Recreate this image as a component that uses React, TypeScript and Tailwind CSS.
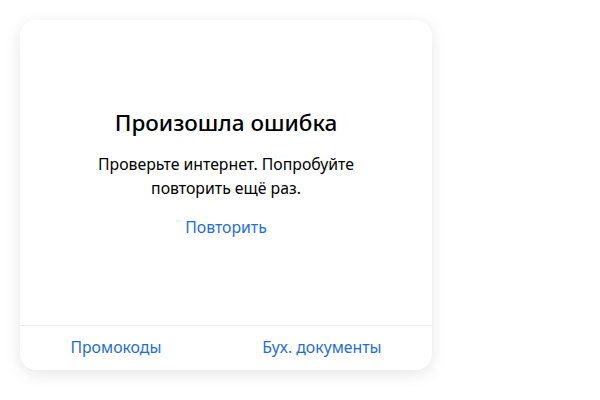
export default function App() {
  return (
    <div className="h-[400px] w-[600px] bg-white font-['Noto_Sans',sans-serif]">
      <div className="pt-5 pl-5">
        <div className="flex h-[350px] w-[412px] flex-col rounded-[16px] bg-white shadow-[0_4px_16px_rgba(0,0,0,0.1)]">
          <div className="flex flex-1 flex-col items-center justify-center border-b border-[#ebebeb] px-6 pt-[2px] text-center">
            <h1 className="text-[22.5px] leading-[28px] font-medium text-black">Произошла ошибка</h1>
            <p className="mt-[15px] text-[15.8px] leading-6 text-black">
              Проверьте интернет. Попробуйте
              <br />
              повторить ещё раз.
            </p>
            <button className="mt-[15px] text-[15.8px] leading-6 text-[#1f6dd6]">Повторить</button>
          </div>
          <div className="flex h-[44px] items-center justify-around text-[15.8px] text-[#1f6dd6]">
            <a href="#">Промокоды</a>
            <a href="#">Бух. документы</a>
          </div>
        </div>
      </div>
    </div>
  )
}
